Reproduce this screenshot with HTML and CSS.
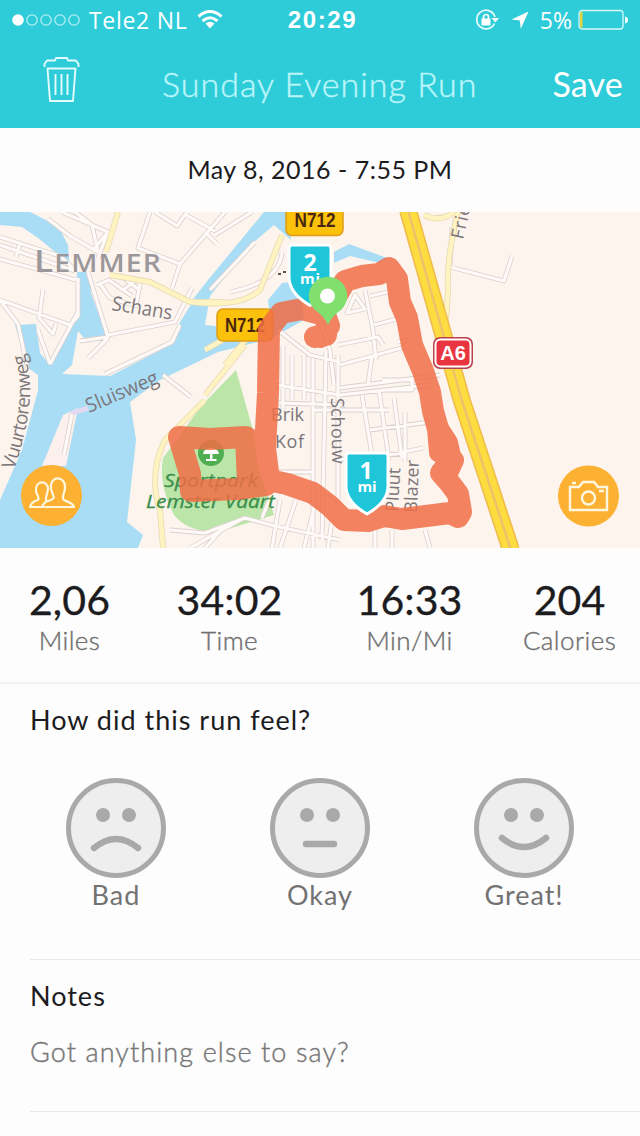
FILE: index.html
```html
<!DOCTYPE html>
<html lang="en">
<head>
<meta charset="utf-8">
<title>Sunday Evening Run</title>
<link rel="stylesheet" href="styles.css">
</head>
<body>
<div class="app">
  <header class="header">
    <div class="status">
      <div class="status-left">
        <svg class="dots" width="70" height="16" viewBox="0 0 70 16"><circle cx="7" cy="8" r="5.8" fill="#fff"/><g fill="none" stroke="#b9f0f4" stroke-width="1.2"><circle cx="21" cy="8" r="5.2"/><circle cx="35" cy="8" r="5.2"/><circle cx="49" cy="8" r="5.2"/><circle cx="63" cy="8" r="5.2"/></g></svg>
        <span class="carrier">Tele2 NL</span>
        <svg class="wifi" width="26" height="20" viewBox="0 0 26 20"><g fill="none" stroke="#fff" stroke-width="3"><path d="M1.5 6.5Q13-3.5 24.500 6.500"/><path d="M5.500 11Q13 4.500 20.500 11"/></g><path d="M8.500 13.500Q13 10 17.500 13.500L13 18.500Z" fill="#fff"/></svg>
      </div>
      <span class="clock">20:29</span>
      <div class="status-right">
        <svg width="24" height="22" viewBox="0 0 24 22"><path d="M19.500 14.500A9.300 9.300 0 1 1 20 8" fill="none" stroke="#e6fbfc" stroke-width="1.700"/><path d="M16.500 9h7.500l-3.700 4.500z" fill="#fff"/><rect x="6.500" y="9.500" width="9" height="7" fill="#fff"/><path d="M8.500 10V8a2.500 2.500 0 0 1 5 0v2" fill="none" stroke="#fff" stroke-width="1.700"/></svg>
        <svg class="arrow" width="18" height="18" viewBox="0 0 18 18"><path d="M17.500.5L9.800 18 8.800 9.600.5 8.500Z" fill="#fff"/></svg>
        <span class="percent">5%</span>
        <svg width="50" height="22" viewBox="0 0 50 22"><rect x="1" y="1.500" width="44" height="18.500" rx="3" fill="none" stroke="#d9f8fa" stroke-width="1.300"/><path d="M2 3h2.500v15.500H2z" fill="#e7d43c"/><path d="M47 7.500q3 .5 3 3.500t-3 3.500z" fill="#fff"/></svg>
      </div>
    </div>
    <div class="nav">
      <svg class="trash" width="38" height="48" viewBox="0 0 38 48"><g fill="none" stroke="#e4fbff" stroke-width="1.900" stroke-linejoin="round"><path d="M1.500 11V8l2.500-3.500h8l1-2.500h11l1 2.500h8L35.500 8v3"/><path d="M4.500 12.500h28L30 45H7Z"/><path d="M12.500 18v21M18.500 18v21M24.500 18v21"/></g></svg>
      <h1 class="title">Sunday Evening Run</h1>
      <span class="save">Save</span>
    </div>
  </header>

  <div class="date">May 8, 2016 - 7:55 PM</div>

  <svg class="map" width="640" height="336" viewBox="0 212 640 336">
    <defs>
      <path id="streets" d="M0 237L60 256L75 270M0 259L76 280M20 243l-4 14M0 300L70 325L78 316V278M43 290l-4 28l14 16l3-10M0 245l75 26M0 300L18 324L28 370M50 364L78 312M50 364L38 330M48 219L70 236L98 252L92 225L75 212M62 212L108 232L93 250M108 232L98 258M150 212L138 248L180 264L172 288M180 264L225 212M155 212l22 14l10-14M186 215l29 16M205 232l12 12M88 272L108 337L80 341M108 335L175 322L192 288M105 374L172 342L180 325M108 338L88 358M97 285l12-5l14 10l12-9M100 284l10 14l26 8l5-28M112 282l20 14M120 275l18 14M163 375l28 22M72 414L64 455M215 235L252 212M210 290l45-48M230 292q50-10 52-40M278 330L310 355L340 362M283 346V410M292 355v45M304 355v45M313 358v190M326 352L322 540M338 355V505M276 385L340 395L430 385M278 403L345 405M275 472h39M314 410h75M340 365L405 347M355 295l-8 18l18-4zM365 290l8 40l3 30M370 296l27-6M374 325l23-6M338 345l40-8l5 8M372 355l-4 30M340 388L440 375M362 395L372 455M379 390l10 70M394 398l8 60M382 380h30v10h-30M370 430l60-8M405 412v50M335 460l70-7M398 453l25-5M170 530L205 533L245 518L275 526L340 540M190 548l50-28M205 548l18-20M262 518l8-20M296 500L280 548M315 505L304 548M332 520L328 548M375 530v18M392 530v18M425 530l5 18M280 500l-8 48M320 320l10 30l4 35M398 342l10-2M452 227L450 267L504 281L512 256"/>
      <path id="mains" d="M118 212L106 252M110 275L150 282L190 302H225M192 302Q240 308 260 290L282 235M205 400L165 440Q148 475 160 510L163 548M245 345L205 395M458 212Q446 260 448 290L446 320M424 215q16 8 30-3M262 320L225 365M205 350L240 330"/>
      <path id="vuur" d="M14 470Q40 395 24 352"/>
    </defs>
    <rect y="212" width="640" height="336" fill="#fdf4ed"/>
    <g fill="#a9ddf5">
      <path d="M0 212H30L58 226L68 245L70 272L60 256L38 238L22 227L0 225Z"/>
      <path d="M77 272H89L91 293L107 336L84 338L78 331L72 365L62 374L110 376L174 343L180 322L195 298L190 303L208 280L264 212H287L291 240L274 225L247 248L210 296L205 325L244 329L270 320L268 300L282 283L300 281L304 320L270 339L218 352L160 380L130 402L136 440L127 522L143 535L138 548H0V500L22 450L38 390V375L28 368L15 325L36 324L40 353L50 365L76 320Z"/>
      <path d="M334 252L349 244L387 258L380 263L350 256L334 263Z"/>
    </g>
    <path d="M63 415L78 408L66 466H42Z" fill="#fbf0eb"/>
    <path d="M70 414l18-6" stroke="#e5d8f2" stroke-width="5"/>
    <path d="M236 370L253 430L258 465L274 515L225 530Q190 535 174 515Q158 485 163 458L202 405Z" fill="#bce5aa"/>
    <use href="#streets" fill="none" stroke="#dbd0ce" stroke-width="4.800" stroke-linejoin="round"/>
    <use href="#streets" fill="none" stroke="#fffaf7" stroke-width="3.200" stroke-linejoin="round"/>
    <use href="#mains" fill="none" stroke="#e6dab5" stroke-width="6"/>
    <use href="#mains" fill="none" stroke="#fff3c2" stroke-width="4.400"/>
    <path d="M408 210L462 401L511 550" fill="none" stroke="#f0bb4e" stroke-width="18"/>
    <path d="M408 210L462 401L511 550" fill="none" stroke="#fddc3f" stroke-width="15"/>
    <path d="M408 210L462 401L511 550" fill="none" stroke="#ecc26b" stroke-width="2.500"/>

    <g class="label">
      <text x="34" y="272" class="town" textLength="128" lengthAdjust="spacingAndGlyphs"><tspan class="cap">L</tspan>EMMER</text>
      <text transform="translate(111 310) rotate(9)" font-size="20" textLength="61" lengthAdjust="spacingAndGlyphs">Schans</text>
      <text transform="translate(89 413) rotate(-23)" font-size="20" textLength="77" lengthAdjust="spacingAndGlyphs">Sluisweg</text>
      <text font-size="19" textLength="119" lengthAdjust="spacingAndGlyphs"><textPath href="#vuur" textLength="119">Vuurtorenweg</textPath></text>
      <text x="271" y="421" font-size="18" textLength="33">Brik</text>
      <text x="275" y="448" font-size="18" textLength="29">Kof</text>
      <text transform="translate(331 398) rotate(89)" font-size="18" textLength="66">Schouw</text>
      <text transform="translate(398 512) rotate(-87)" font-size="18" textLength="44">Pluut</text>
      <text transform="translate(417 513) rotate(-88)" font-size="18" textLength="53">Blazer</text>
      <text transform="translate(463 240) rotate(-77)" font-size="18" textLength="34">Frie</text>
      <path d="M278 274h3M283 272h3" stroke="#555" stroke-width="2"/>
      <g class="park"><text x="164" y="487" textLength="94" lengthAdjust="spacingAndGlyphs">Sportpark</text><text x="146" y="508" textLength="129" lengthAdjust="spacingAndGlyphs">Lemster Vaart</text></g>
    </g>
    <circle cx="211" cy="453" r="13" fill="#4fae50"/>
    <path d="M203 454a8 6 0 0 1 16 0zM210 453h2.500v7h-2.500zM206 459h10.500v2h-10.500z" fill="#fff"/>
    <g class="road-sign">
      <rect x="286" y="200" width="57" height="35.500" rx="6"/><text x="315" y="227" text-anchor="middle" textLength="41" lengthAdjust="spacingAndGlyphs">N712</text>
      <rect x="217" y="309" width="56" height="32" rx="6"/><text x="245" y="332" text-anchor="middle" textLength="40" lengthAdjust="spacingAndGlyphs">N712</text>
    </g>
    <path d="M337 295L345 281L362 276L379 274L389 268L397 279L400 302L407 318L412 345L423 371L430 392L433 411L438 429L447 443L451 460L441 473L449 482L458 494L461 512L458 517L450 513L402 519L384 516L368 521L344 520L330 506L313 493L287 484L269 480L265 448L268 393L269 329L281 313L302 309L325 315L329 326L320 337M266 485L238 489L191 491L190 474L179 437L210 439L246 437L248 484M438 428L440 452L453 460L446 475M258 440V484M315 337L326 335" opacity=".85" fill="none" stroke="#f06d47" stroke-width="22" stroke-linejoin="round" stroke-linecap="round"/>
    <rect x="433" y="337" width="40" height="32" rx="7" fill="#b9414c"/><rect x="435.500" y="339.500" width="35" height="27" rx="5" fill="#e8353f" stroke="#fff" stroke-width="2"/>
    <text class="a6" x="453" y="360" text-anchor="middle">A6</text>
    <g fill="#1fc5d9" stroke="#fff" stroke-width="3" stroke-linejoin="round">
      <path d="M292 245H328Q331 245 331 248V277Q331 293 310 305.500Q289 293 289 277V248Q289 245 292 245Z"/>
      <path d="M349 453H385Q388 453 388 456V486Q388 502 367 514Q346 502 346 486V456Q346 453 349 453Z"/>
    </g>
    <g class="mile" text-anchor="middle"><text x="310" y="271" font-size="23">2</text><text x="310" y="284" font-size="15" textLength="20">mi</text><text x="366" y="479" font-size="23">1</text><text x="367" y="492" font-size="15" textLength="19">mi</text></g>
    <path d="M328 325Q324 316 315 310A19.200 19.200 0 1 1 341 310Q332 316 328 325Z" fill="#81df70"/><circle cx="327.500" cy="296" r="7.500" fill="#fff"/>
    <circle cx="51.500" cy="495.500" r="30.500" fill="#fcb132"/>
    <g fill="#fcb132" stroke="#fff6df" stroke-width="2.200" stroke-linejoin="round"><path d="M30 507Q31 502 38 500C40 498 37 496 36 491C35 480 47 480 48 488C48 494 45 497 46 500L50 507Z"/><path d="M42 507Q43 502 51 500C56 498 53 496 51 489C49 475 66 475 65 488C64 496 61 498 64 500C70 503 73 503 74 507Z"/></g>
    <circle cx="588.500" cy="496" r="30.500" fill="#fcb132"/>
    <g fill="none" stroke="#fff6df" stroke-width="2.400"><path d="M570 487h9l4-5h11l4 5h9v23h-37Z"/><circle cx="588.500" cy="498" r="6.500"/><path d="M599 491h5M572 483h4"/></g>
  </svg>

  <section class="stats">
    <div class="stat"><b>2,06</b><span>Miles</span></div>
    <div class="stat"><b>34:02</b><span>Time</span></div>
    <div class="stat"><b>16:33</b><span>Min/Mi</span></div>
    <div class="stat"><b>204</b><span>Calories</span></div>
  </section>

  <section class="feel">
    <h2 class="heading question">How did this run feel?</h2>
    <div class="faces">
      <div class="face"><svg width="100" height="100" viewBox="0 0 100 100"><circle class="head" cx="50" cy="50" r="47.500"/><circle class="eye" cx="37" cy="37" r="7"/><circle class="eye" cx="63" cy="37" r="7"/><path class="mouth" d="M28 70Q50 52 72 70"/></svg><span>Bad</span></div>
      <div class="face"><svg width="100" height="100" viewBox="0 0 100 100"><circle class="head" cx="50" cy="50" r="47.500"/><circle class="eye" cx="37" cy="37" r="7"/><circle class="eye" cx="63" cy="37" r="7"/><path class="mouth" d="M36 66H64"/></svg><span>Okay</span></div>
      <div class="face"><svg width="100" height="100" viewBox="0 0 100 100"><circle class="head" cx="50" cy="50" r="47.500"/><circle class="eye" cx="37" cy="37" r="7"/><circle class="eye" cx="63" cy="37" r="7"/><path class="mouth" d="M28 60Q50 78 72 60"/></svg><span>Great!</span></div>
    </div>
  </section>

  <section class="notes">
    <h2 class="heading">Notes</h2>
    <p class="placeholder">Got anything else to say?</p>
  </section>
</div>
</body>
</html>
```
FILE: styles.css
```css
* { box-sizing: border-box; }
body { margin: 0; background: #fdfdfd; font-family: Lato, "Open Sans", sans-serif; color: #1c1c1e; }
h1, h2, p { margin: 0; font-weight: 400; }
svg { display: block; flex: none; }
.app { width: 640px; height: 1136px; overflow: hidden; white-space: nowrap; }
.header { height: 128px; background: #2dccd8; color: #fff; }
.status { height: 40px; display: grid; grid-template-columns: 1fr auto 1fr; align-items: center; padding: 0 12px 0 11px; font-family: "Open Sans", sans-serif; font-size: 23px; line-height: 40px; }
.status-left, .status-right { display: flex; align-items: center; }
.status-right { justify-content: flex-end; }
.carrier { margin-left: 8px; letter-spacing: .7px; }
.wifi { margin-left: 10px; }
.clock { padding-left: 6px; font-family: "Liberation Sans", sans-serif; font-weight: 700; font-size: 24px; letter-spacing: 1.6px; }
.arrow { margin-left: 12px; }
.percent { margin: 0 6px 0 11px; font-size: 23px; }
.nav { height: 88px; display: flex; align-items: center; padding: 0 17px 0 43px; }
.trash { margin-top: -8px; }
.title { margin-left: 81px; font-size: 34px; font-weight: 300; letter-spacing: 1px; color: #baf5fa; -webkit-text-stroke: .45px #baf5fa; margin-top: -2px; }
.save { margin-left: auto; margin-top: -2px; font-size: 34px; letter-spacing: .2px; }
.date { height: 84px; line-height: 82px; text-align: center; font-size: 25px; letter-spacing: .5px; }
.label { font-family: "Open Sans", sans-serif; fill: #7c777b; }
.town { font-size: 25px; font-weight: 600; letter-spacing: 1px; fill: #9b979b; }
.cap { font-size: 31px; }
.park { font-size: 19px; font-style: italic; fill: #398e49; stroke: #398e49; stroke-width: .3px; }
.road-sign rect { fill: #fbc10b; stroke: #dd9c17; stroke-width: 1.5px; }
.road-sign text { font: bold 20px "Liberation Sans", sans-serif; fill: #4a2610; }
.a6 { font: bold 20px "Liberation Sans", sans-serif; fill: #fff; }
.mile { font-family: "Open Sans", sans-serif; font-weight: 700; fill: #fff; }
.stats { height: 136px; display: grid; grid-template-columns: 139px 181px 179px 141px; padding-top: 26px; border-bottom: 2px solid #f2f2f2; }
.stat { display: flex; flex-direction: column; align-items: center; }
.stat b { font-size: 41px; line-height: 52px; font-weight: 400; letter-spacing: .1px; -webkit-text-stroke: .3px #1c1c1e; }
.stat span { font-size: 26px; line-height: 28px; font-weight: 300; color: #707070; letter-spacing: .4px; -webkit-text-stroke: .4px #707070; }
.feel { height: 276px; margin-left: 30px; border-bottom: 1px solid #e8e8e8; }
.heading { font-size: 27px; line-height: 36px; letter-spacing: 1px; }
.question { padding-top: 18px; }
.faces { margin: 40px 66px 0 36px; display: flex; justify-content: space-between; }
.face { width: 100px; display: flex; flex-direction: column; align-items: center; font-size: 27px; line-height: 34px; color: #727272; letter-spacing: 1px; }
.head { fill: #eee; stroke: #a9a9a9; stroke-width: 5px; }
.eye { fill: #a9a9a9; }
.mouth { fill: none; stroke: #a9a9a9; stroke-width: 6.5px; stroke-linecap: round; }
.notes { height: 152px; margin-left: 30px; padding-top: 18px; border-bottom: 1px solid #e8e8e8; }
.placeholder { margin-top: 21px; font-size: 27px; line-height: 34px; font-weight: 300; color: #777; letter-spacing: 1.1px; -webkit-text-stroke: .4px #777; }
```
